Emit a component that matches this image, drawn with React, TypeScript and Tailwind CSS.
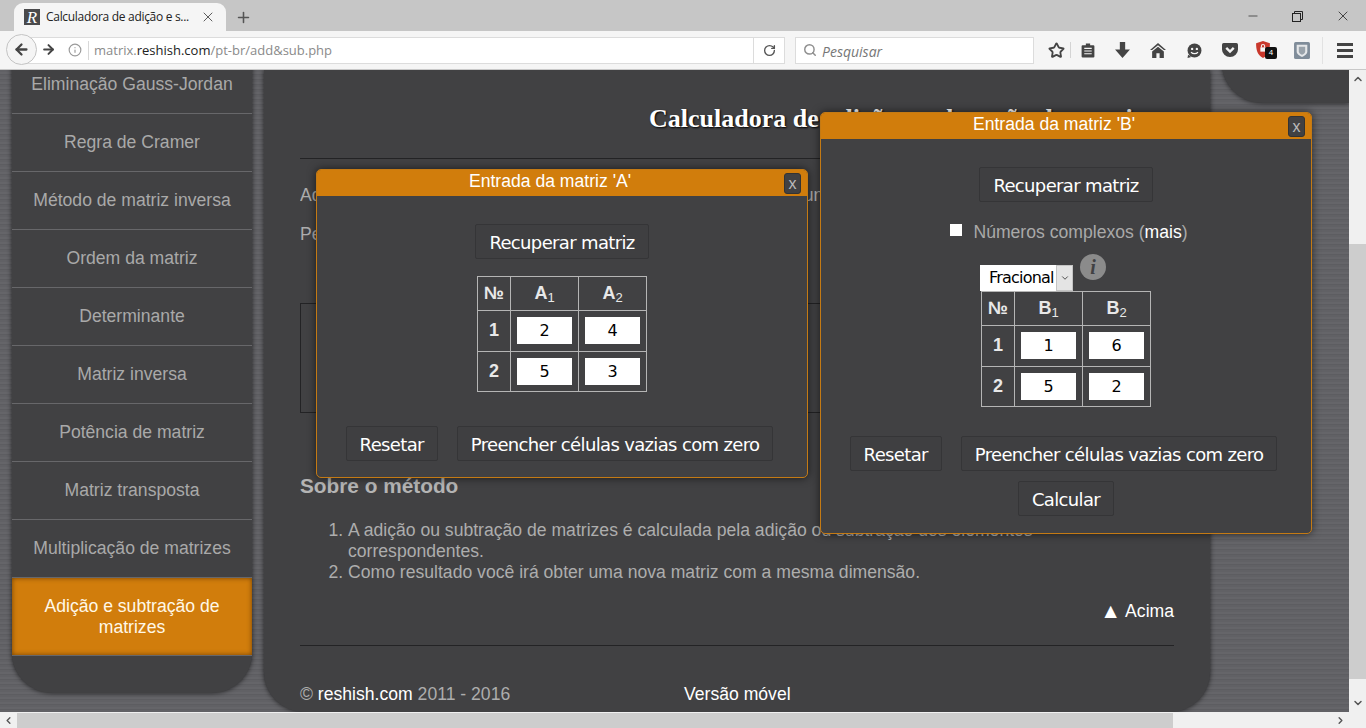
import { ArrowLeft, ArrowRight, ChevronDown, ChevronLeft, ChevronRight, ChevronUp, Info, Minus, Plus, RotateCw, Search, Star, X } from "lucide-react"

const sideItems = [
  "Eliminação Gauss-Jordan",
  "Regra de Cramer",
  "Método de matriz inversa",
  "Ordem da matriz",
  "Determinante",
  "Matriz inversa",
  "Potência de matriz",
  "Matriz transposta",
  "Multiplicação de matrizes",
]

const texture = "bg-[repeating-linear-gradient(0deg,#616165_0px,#616165_2px,#5d5d61_2px,#5d5d61_3px,#656569_3px,#656569_5px)]"

function Logo() {
  return (
    <div className="w-4 h-4 bg-[#4a4a4c] flex items-center justify-center text-white text-[17px] italic leading-none font-['Liberation_Serif',serif] shrink-0">
      R
    </div>
  )
}

function Slot({ children, className = "w-[36px]" }: { children: React.ReactNode; className?: string }) {
  return <div className={`flex justify-center ${className}`}>{children}</div>
}

function Toolbar() {
  return (
    <div className="h-[39px] bg-[#f5f5f5] border-b border-[#c8c8c8] flex items-center pl-[6px] relative shrink-0">
      {/* caixa de endereço */}
      <div className="w-[733px] h-[27px] ml-[15px] bg-white border border-[#dcdcdc] flex items-center pl-[41px] font-['Open_Sans',sans-serif] text-[13px]">
        <Info size={14} className="text-[#9a9a9a] mr-[6px] ml-[5px]" />
        <div className="h-[19px] border-l border-[#d8d8d8] mr-[5px]" />
        <span className="text-[#8a8a8a] mt-[2px]">matrix.</span>
        <span className="text-[#222] mt-[2px]">reshish.com</span>
        <span className="text-[#8a8a8a] mt-[2px]">/pt-br/add&sub.php</span>
      </div>
      <div className="w-[31px] h-[27px] bg-white border-y border-r border-[#dcdcdc] flex items-center justify-center">
        <RotateCw size={13} strokeWidth={2.5} className="text-[#555]" />
      </div>
      <div className="w-[239px] h-[27px] ml-[10px] bg-white border border-[#dcdcdc] flex items-center pl-[7px] gap-[5px]">
        <Search size={14} strokeWidth={2.5} className="text-[#8e8e8e]" />
        <span className="italic text-[14px] text-[#777] font-['Open_Sans',sans-serif] mt-[2px]">Pesquisar</span>
      </div>

      {/* botões voltar / avançar */}
      <div className="absolute left-[6px] top-[3px] w-[31px] h-[31px] rounded-full bg-[#f5f5f5] border border-[#c4c4c4] flex items-center justify-center">
        <ArrowLeft size={17} strokeWidth={3.2} className="text-[#444]" />
      </div>
      <div className="absolute left-[41px] top-[11px]">
        <ArrowRight size={15} strokeWidth={3.2} className="text-[#444]" />
      </div>

      <div className="flex items-center ml-[8px] text-[#444]">
        <Slot className="w-[28px]"><Star size={17} strokeWidth={2.6} /></Slot>
        <div className="w-px h-[16px] bg-[#d4d4d4]" />
        <Slot className="w-[33px]">
          <svg width="14" height="16" viewBox="0 0 13 15">
            <path d="M1.500 3h3V1.500h4V3h3A1 1 0 0 1 12.500 4v9.500a1 1 0 0 1-1 1h-10a1 1 0 0 1-1-1V4a1 1 0 0 1 1-1z" fill="#444" />
            <path d="M3 6h7M3 8.500h7M3 11h7" stroke="#f5f5f5" strokeWidth="1" />
          </svg>
        </Slot>
        <Slot>
          <svg width="15" height="16" viewBox="0 0 14 15">
            <path d="M4.500 0h5v7H14l-7 8-7-8h4.500z" fill="#444" />
          </svg>
        </Slot>
        <Slot>
          <svg width="16" height="15" viewBox="0 0 15 14">
            <path d="M7.500 0 15 6.500h-2L7.500 2 2 6.500H0zM7.500 3.500 13 8v6H9V9.500H6V14H2V8z" fill="#444" />
          </svg>
        </Slot>
        <Slot>
          <svg width="15" height="15" viewBox="0 0 14 14">
            <circle cx="7" cy="7" r="6.500" fill="#444" />
            <path d="M1 11 0.500 14 4 13z" fill="#444" />
            <circle cx="4.800" cy="5.500" r="1.100" fill="#f5f5f5" />
            <circle cx="9.200" cy="5.500" r="1.100" fill="#f5f5f5" />
            <path d="M3.800 8.500c1.500 2 4.900 2 6.400 0" stroke="#f5f5f5" strokeWidth="1.200" fill="none" />
          </svg>
        </Slot>
        <Slot>
          <svg width="16" height="14" viewBox="0 0 15 13">
            <path d="M1.500 0h12A1.500 1.500 0 0 1 15 1.500V6a7.500 7 0 0 1-15 0V1.500A1.500 1.500 0 0 1 1.500 0z" fill="#444" />
            <path d="M4 4.500 7.500 8 11 4.500" stroke="#f5f5f5" strokeWidth="2.200" fill="none" />
          </svg>
        </Slot>
        <Slot>
          <div className="relative w-[20px] h-[18px]">
            <svg width="14" height="17" viewBox="0 0 13 16">
              <path d="M6.500 0 13 2c0 6-1 11-6.500 14C1 13 0 8 0 2z" fill="#c9382c" />
              <rect x="4" y="6" width="5" height="4" fill="#f5f5f5" />
              <path d="M5 6V4.800a1.500 1.500 0 0 1 3 0V6" stroke="#f5f5f5" fill="none" />
            </svg>
            <span className="absolute left-[9px] top-[6px] w-[12px] h-[12px] bg-[#111] rounded-[2px] text-white text-[8px] leading-[12px] text-center font-['Liberation_Sans',sans-serif]">4</span>
          </div>
        </Slot>
        <Slot>
          <svg width="16" height="17" viewBox="0 0 15 16">
            <rect width="15" height="16" rx="1.500" fill="#7f8c99" />
            <path d="M2.500 2.500h10V9c0 2.500-2.500 4-5 5-2.500-1-5-2.500-5-5z" fill="#e5e7e9" />
            <path d="M4.500 4.500h6V9c0 1.500-1.500 2.500-3 3-1.500-.5-3-1.500-3-3z" fill="#9aa3ab" />
          </svg>
        </Slot>
        <div className="w-px h-[27px] bg-[#e2e2e2] ml-[2px] mr-[14px]" />
        <div className="flex flex-col gap-[3px]">
          <div className="w-[16px] h-[3px] bg-[#444]" />
          <div className="w-[16px] h-[3px] bg-[#444]" />
          <div className="w-[16px] h-[3px] bg-[#444]" />
        </div>
      </div>
    </div>
  )
}

function TabBar() {
  return (
    <div className="h-[31px] bg-[#c6c6c6] flex items-end shrink-0 relative pl-[14px] text-[#333]">
      <div className="w-[212px] h-[28px] bg-[#f5f5f5] rounded-t-[9px] flex items-center pl-[10px]">
        <Logo />
        <span className="ml-[6px] w-[143px] text-[12px] tracking-[-0.3px] font-['Open_Sans',sans-serif] text-[#222] whitespace-nowrap">Calculadora de adição e s...</span>
        <X size={16} strokeWidth={1.3} className="ml-[11px] text-[#444]" />
      </div>
      <Plus size={17} strokeWidth={2.2} className="ml-[9px] mb-[5px] text-[#555]" />
      <div className="absolute top-[8px] right-[15px] flex items-center gap-[32px] text-[#222]">
        <Minus size={14} strokeWidth={1.2} />
        <svg width="11" height="11" viewBox="0 0 11 11" fill="none" stroke="#222">
          <rect x="0.500" y="2.500" width="8" height="8" />
          <path d="M2.500 2.500v-2h8v8h-2" />
        </svg>
        <X size={16} strokeWidth={1.2} />
      </div>
    </div>
  )
}

function Cell({ value }: { value: string }) {
  return (
    <td className="border border-[#b5b5b5] px-[6px] py-[6px]">
      <div className="w-[55px] h-[27px] mx-auto bg-white text-black font-normal text-[16px] leading-[27px] text-center font-['DejaVu_Sans',sans-serif]">{value}</div>
    </td>
  )
}

function MatrixTable({ name, rows }: { name: string; rows: string[][] }) {
  return (
    <table className="border-collapse font-bold text-[18px] text-[#e8e8e8]">
      <tbody>
        <tr className="h-[34px]">
          <td className="border border-[#b5b5b5] w-[33px] text-center">№</td>
          <td className="border border-[#b5b5b5] w-[68px] text-center">{name}<sub className="text-[13px] font-normal">1</sub></td>
          <td className="border border-[#b5b5b5] w-[68px] text-center">{name}<sub className="text-[13px] font-normal">2</sub></td>
        </tr>
        {rows.map((row, i) => (
          <tr key={i} className="h-[40.5px]">
            <td className="border border-[#b5b5b5] text-center">{i + 1}</td>
            <Cell value={row[0]} />
            <Cell value={row[1]} />
          </tr>
        ))}
      </tbody>
    </table>
  )
}

function DarkButton({ children }: { children: string }) {
  return (
    <div className="h-[35px] px-[13px] bg-[#3f3f41] border border-[#353537] rounded-[2px] text-white text-[18px] leading-[35px] font-['DejaVu_Sans',sans-serif] whitespace-nowrap tracking-[-0.65px]">
      {children}
    </div>
  )
}

function Dialog({ title, className, children }: { title: string; className: string; children: React.ReactNode }) {
  return (
    <div className={`absolute w-[492px] bg-[#414143] border border-[#c47a14] rounded-[5px] shadow-[0_0_8px_rgba(0,0,0,0.6)] ${className}`}>
      <div className="h-[26px] pr-[24px] bg-[#d17d0c] rounded-t-[4px] text-white text-[17.6px] leading-[23px] text-center relative">
        {title}
        <div className="absolute right-[6px] top-[3px] w-[17px] h-[21px] bg-[#414143] border border-[#333] rounded-[3px] text-[#bbb] text-[16px] leading-[19px] text-center">x</div>
      </div>
      {children}
    </div>
  )
}

function Page() {
  return (
    <div className={`flex-1 relative overflow-hidden font-['Liberation_Sans',sans-serif] ${texture}`}>
      <div className="flex h-full">
        {/* menu lateral */}
        <div className="w-[240px] ml-[12px] -mt-[14px] self-start h-[637px] bg-[#414143] rounded-b-[40px] shadow-[0_0_5px_rgba(0,0,0,0.7)] text-[#a9a9a9] text-[17.6px] text-center shrink-0">
          {sideItems.map(item => (
            <div key={item} className="h-[58px] flex items-center justify-center border-b border-[#67676a] pb-[1px]">{item}</div>
          ))}
          <div className="h-[78px] bg-[#d17d0c] text-[#fff8e8] border-b border-[#67676a] leading-[21px] flex items-center justify-center px-[20px] shadow-[inset_0_0_5px_rgba(90,50,0,0.8)]">
            Adição e subtração de matrizes
          </div>
        </div>

        {/* conteúdo principal */}
        <div className="w-[946px] ml-[12px] h-full bg-[#414143] rounded-b-[40px] shadow-[0_0_5px_rgba(0,0,0,0.7)] px-[36px] text-[#adadad] text-[17.6px] shrink-0 flex flex-col">
          <h1 className="mt-[33px] h-[32px] pl-[349px] text-white font-bold text-[26px] leading-[32px] font-['Liberation_Serif',serif] [text-shadow:1px_1px_2px_#000] whitespace-nowrap">
            Calculadora de adição e subtração de matrizes
          </h1>
          <div className="mt-[23px] border-t border-[#232325]" />
          <p className="mt-[26px] leading-[20px] whitespace-nowrap overflow-hidden">Adição e subtração de matrizes passo a passo segundo um conjunto</p>
          <p className="mt-[19px] leading-[20px]">Pesquisar</p>
          <div className="mt-[59px] h-[110px] border border-[#232325]" />
          <h2 className="mt-[61px] text-[20.8px] leading-[24px] font-bold text-[#b4b4b4]">Sobre o método</h2>
          <ol className="mt-[22px] list-decimal pl-[48px] pr-[100px] leading-[21px]">
            <li>A adição ou subtração de matrizes é calculada pela adição ou subtração dos elementos correspondentes.</li>
            <li>Como resultado você irá obter uma nova matriz com a mesma dimensão.</li>
          </ol>
          <div className="mt-[17px] flex justify-end items-center text-white leading-[22px]">
            <span className="text-[21px] leading-[22px] mr-[4px]">▲</span>
            <span>Acima</span>
          </div>
          <div className="mt-[23px] border-t border-[#232325]" />
          <div className="mt-[37px] flex leading-[22px]">
            <div className="w-[384px]">© <span className="text-white">reshish.com</span> 2011 - 2016</div>
            <div className="text-white">Versão móvel</div>
          </div>
        </div>

        {/* painel direito */}
        <div className="ml-[12px] flex-1 -mt-[7px] h-[40px] bg-[#414143] rounded-bl-[40px] shadow-[0_0_5px_rgba(0,0,0,0.7)]" />
      </div>

      <Dialog title="Entrada da matriz 'A'" className="left-[316px] top-[99px] h-[309px]">
        <div className="flex flex-col items-center pt-[28px]">
          <DarkButton>Recuperar matriz</DarkButton>
          <div className="mt-[17px]">
            <MatrixTable name="A" rows={[["2", "4"], ["5", "3"]]} />
          </div>
          <div className="mt-[34px] mr-[5px] flex gap-[19px]">
            <DarkButton>Resetar</DarkButton>
            <DarkButton>Preencher células vazias com zero</DarkButton>
          </div>
        </div>
      </Dialog>

      <Dialog title="Entrada da matriz 'B'" className="left-[820px] top-[42px] h-[422px]">
        <div className="flex flex-col items-center pt-[28px]">
          <DarkButton>Recuperar matriz</DarkButton>
          <div className="mt-[18px] ml-[6px] h-[24px] flex items-center text-[17.6px] text-[#a9a9a9]">
            <div className="w-3 h-3 bg-white mr-[11px] mb-[4px]" />
            <span>Números complexos (<span className="text-white">mais</span>)</span>
          </div>
          <div className="w-[172px] mt-[21px] relative">
            <div className="flex h-[26px] w-[93px]">
              <div className="w-[76px] bg-white text-black text-[16px] leading-[26px] pl-[9px] font-['DejaVu_Sans',sans-serif] tracking-[-0.8px]">Fracional</div>
              <div className="w-[17px] bg-[#e4e4e4] border border-[#c4c4c4] flex items-center justify-center">
                <ChevronDown size={10} className="text-[#333]" />
              </div>
            </div>
            <div className="absolute left-[100px] -top-[11px] w-[26px] h-[26px] rounded-full bg-[#8b8b8b] text-[#414143] text-[20px] font-bold italic leading-[26px] text-center font-['Liberation_Serif',serif]">i</div>
          </div>
          <MatrixTable name="B" rows={[["1", "6"], ["5", "2"]]} />
          <div className="mt-[29px] mr-[5px] flex gap-[19px]">
            <DarkButton>Resetar</DarkButton>
            <DarkButton>Preencher células vazias com zero</DarkButton>
          </div>
          <div className="mt-[10px]">
            <DarkButton>Calcular</DarkButton>
          </div>
        </div>
      </Dialog>
    </div>
  )
}

export default function App() {
  return (
    <div className="w-[1366px] h-[728px] overflow-hidden flex flex-col bg-[#f0f0f0]">
      <TabBar />
      <Toolbar />
      <div className="flex-1 flex min-h-0">
        <div className="flex-1 flex flex-col min-w-0">
          <Page />
          {/* barra de rolagem horizontal */}
          <div className="h-[15px] mt-px bg-[#f0f0f0] flex shrink-0 items-center">
            <div className="w-[17px] flex justify-center"><ChevronLeft size={11} strokeWidth={3} className="text-[#555]" /></div>
            <div className="w-[1156px] h-full bg-[#cdcdcd]" />
            <div className="flex-1 flex justify-end pr-[3px]"><ChevronRight size={11} strokeWidth={3} className="text-[#555]" /></div>
          </div>
        </div>
        {/* barra de rolagem vertical */}
        <div className="w-[17px] bg-[#f0f0f0] flex flex-col items-center shrink-0">
          <ChevronUp size={12} strokeWidth={3} className="text-[#555] mt-[3px]" />
          <div className="w-full h-[435px] bg-[#cdcdcd] mt-[159px]" />
          <ChevronDown size={12} strokeWidth={3} className="text-[#555] mt-[18px]" />
        </div>
      </div>
    </div>
  )
}
